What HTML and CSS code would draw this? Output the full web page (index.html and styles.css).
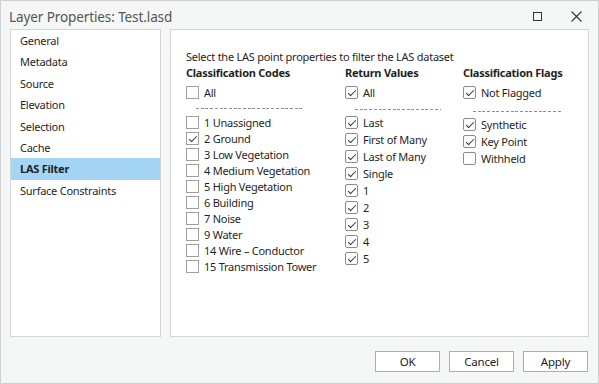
FILE: index.html
```html
<!DOCTYPE html>
<html lang="en">
<head>
  <meta charset="UTF-8" />
  <title>Layer Properties: Test.lasd</title>
  <link rel="stylesheet" href="styles.css">
</head>
<body>
  <div class="window">
    <div class="titlebar">
      <span class="title">Layer Properties: Test.lasd</span>
      <span class="win-btn max"><svg width="9" height="9" viewBox="0 0 9 9"><rect x="0.5" y="0.5" width="8" height="8" fill="none" stroke="#333" stroke-width="1"/></svg></span>
      <span class="win-btn close"><svg width="11" height="11" viewBox="0 0 11 11"><path d="M0.5 0.5 L10.5 10.5 M10.5 0.5 L0.5 10.5" stroke="#333" stroke-width="1.1" fill="none"/></svg></span>
    </div>

    <div class="content">
      <ul class="nav">
        <li>General</li>
        <li>Metadata</li>
        <li>Source</li>
        <li>Elevation</li>
        <li>Selection</li>
        <li>Cache</li>
        <li class="active">LAS Filter</li>
        <li>Surface Constraints</li>
      </ul>

      <div class="panel">
        <p class="intro">Select the LAS point properties to filter the LAS dataset</p>
        <div class="columns">
          <div class="col codes">
            <h4>Classification Codes</h4>
            <label class="row"><span class="box"></span>All</label>
            <div class="dashes"></div>
            <label class="row"><span class="box"></span>1 Unassigned</label>
            <label class="row"><span class="box on"></span>2 Ground</label>
            <label class="row"><span class="box"></span>3 Low Vegetation</label>
            <label class="row"><span class="box"></span>4 Medium Vegetation</label>
            <label class="row"><span class="box"></span>5 High Vegetation</label>
            <label class="row"><span class="box"></span>6 Building</label>
            <label class="row"><span class="box"></span>7 Noise</label>
            <label class="row"><span class="box"></span>9 Water</label>
            <label class="row"><span class="box"></span>14 Wire &ndash; Conductor</label>
            <label class="row"><span class="box"></span>15 Transmission Tower</label>
          </div>

          <div class="col returns">
            <h4>Return Values</h4>
            <label class="row"><span class="box on"></span>All</label>
            <div class="dashes"></div>
            <label class="row"><span class="box on"></span>Last</label>
            <label class="row"><span class="box on"></span>First of Many</label>
            <label class="row"><span class="box on"></span>Last of Many</label>
            <label class="row"><span class="box on"></span>Single</label>
            <label class="row"><span class="box on"></span>1</label>
            <label class="row"><span class="box on"></span>2</label>
            <label class="row"><span class="box on"></span>3</label>
            <label class="row"><span class="box on"></span>4</label>
            <label class="row"><span class="box on"></span>5</label>
          </div>

          <div class="col flags">
            <h4>Classification Flags</h4>
            <label class="row"><span class="box on"></span>Not Flagged</label>
            <div class="dashes"></div>
            <label class="row"><span class="box on"></span>Synthetic</label>
            <label class="row"><span class="box on"></span>Key Point</label>
            <label class="row"><span class="box"></span>Withheld</label>
          </div>
        </div>
      </div>
    </div>

    <div class="footer">
      <button>OK</button>
      <button>Cancel</button>
      <button>Apply</button>
    </div>
  </div>
</body>
</html>
```

FILE: styles.css
```css
* {
  box-sizing: border-box;
}
body {
  margin: 0;
  font-family: "Noto Sans", "Open Sans", sans-serif;
  font-size: 11px;
  letter-spacing: -0.25px;
  color: #1f1f1f;
  background: #fff;
}
.window {
  width: 599px;
  height: 384px;
  border: 1px solid #cfd1d3;
  background: #f5f6f6;
  display: flex;
  flex-direction: column;
}
.titlebar {
  height: 28px;
  display: flex;
  align-items: center;
  padding-left: 8px;
}
.title {
  flex: 1;
  font-size: 13.5px;
  letter-spacing: -0.1px;
  color: #555;
  padding-top: 3px;
}
.win-btn {
  display: flex;
  align-items: center;
  justify-content: center;
  height: 28px;
  padding-top: 2px;
}
.win-btn.max {
  width: 38px;
  margin-right: 1px;
}
.win-btn.close {
  width: 38px;
  margin-right: 3px;
}
.content {
  display: flex;
  gap: 9px;
  padding: 0 9px;
  height: 308px;
}
.nav {
  list-style: none;
  margin: 0;
  padding: 0;
  width: 151px;
  background: #fff;
  border: 1px solid #d3d5d6;
}
.nav li {
  height: 21.4px;
  line-height: 21.4px;
  padding-left: 9px;
}
.nav li.active {
  background: #a5d5f5;
  font-weight: bold;
}
.panel {
  flex: 1;
  background: #fff;
  border: 1px solid #d3d5d6;
  padding: 19px 0 0 15px;
}
.intro {
  margin: 0 0 1px;
  line-height: 15px;
}
.columns {
  display: grid;
  grid-template-columns: 159px 118px 1fr;
}
.col h4 {
  margin: 0 0 3px;
  font-size: 11px;
  font-weight: bold;
  line-height: 16px;
}
.row {
  display: flex;
  align-items: center;
  gap: 5px;
  height: 17px;
}
.codes .row {
  height: 16px;
}
.dashes {
  height: 1px;
  margin: 8px 0 4px 10px;
  width: 86px;
  background: repeating-linear-gradient(90deg, #8f8f8f 0 3px, transparent 3px 4.7px);
}
.codes .dashes {
  width: 108px;
  margin-bottom: 5px;
}
.flags .dashes {
  width: 88px;
  margin-top: 10px;
  margin-bottom: 4px;
}
.box {
  width: 13px;
  height: 13px;
  border: 1px solid #a0a0a0;
  background: #fff;
  flex: none;
  position: relative;
}
.returns .box, .flags .box {
  border-radius: 2px;
  border-color: #8c8c8c;
}
.box.on::after {
  content: "";
  position: absolute;
  left: 3.5px;
  top: 1px;
  width: 3px;
  height: 7px;
  border: solid #333;
  border-width: 0 1.5px 1.5px 0;
  transform: rotate(45deg);
}
.footer {
  flex: 1;
  display: flex;
  justify-content: flex-end;
  gap: 9px;
  padding: 14px 10px 0 0;
}
.footer button {
  width: 65px;
  height: 21px;
  font-family: inherit;
  font-size: 11.5px;
  letter-spacing: -0.2px;
  color: #222;
  background: #fff;
  border: 1px solid #adadad;
  padding: 0;
}
```
